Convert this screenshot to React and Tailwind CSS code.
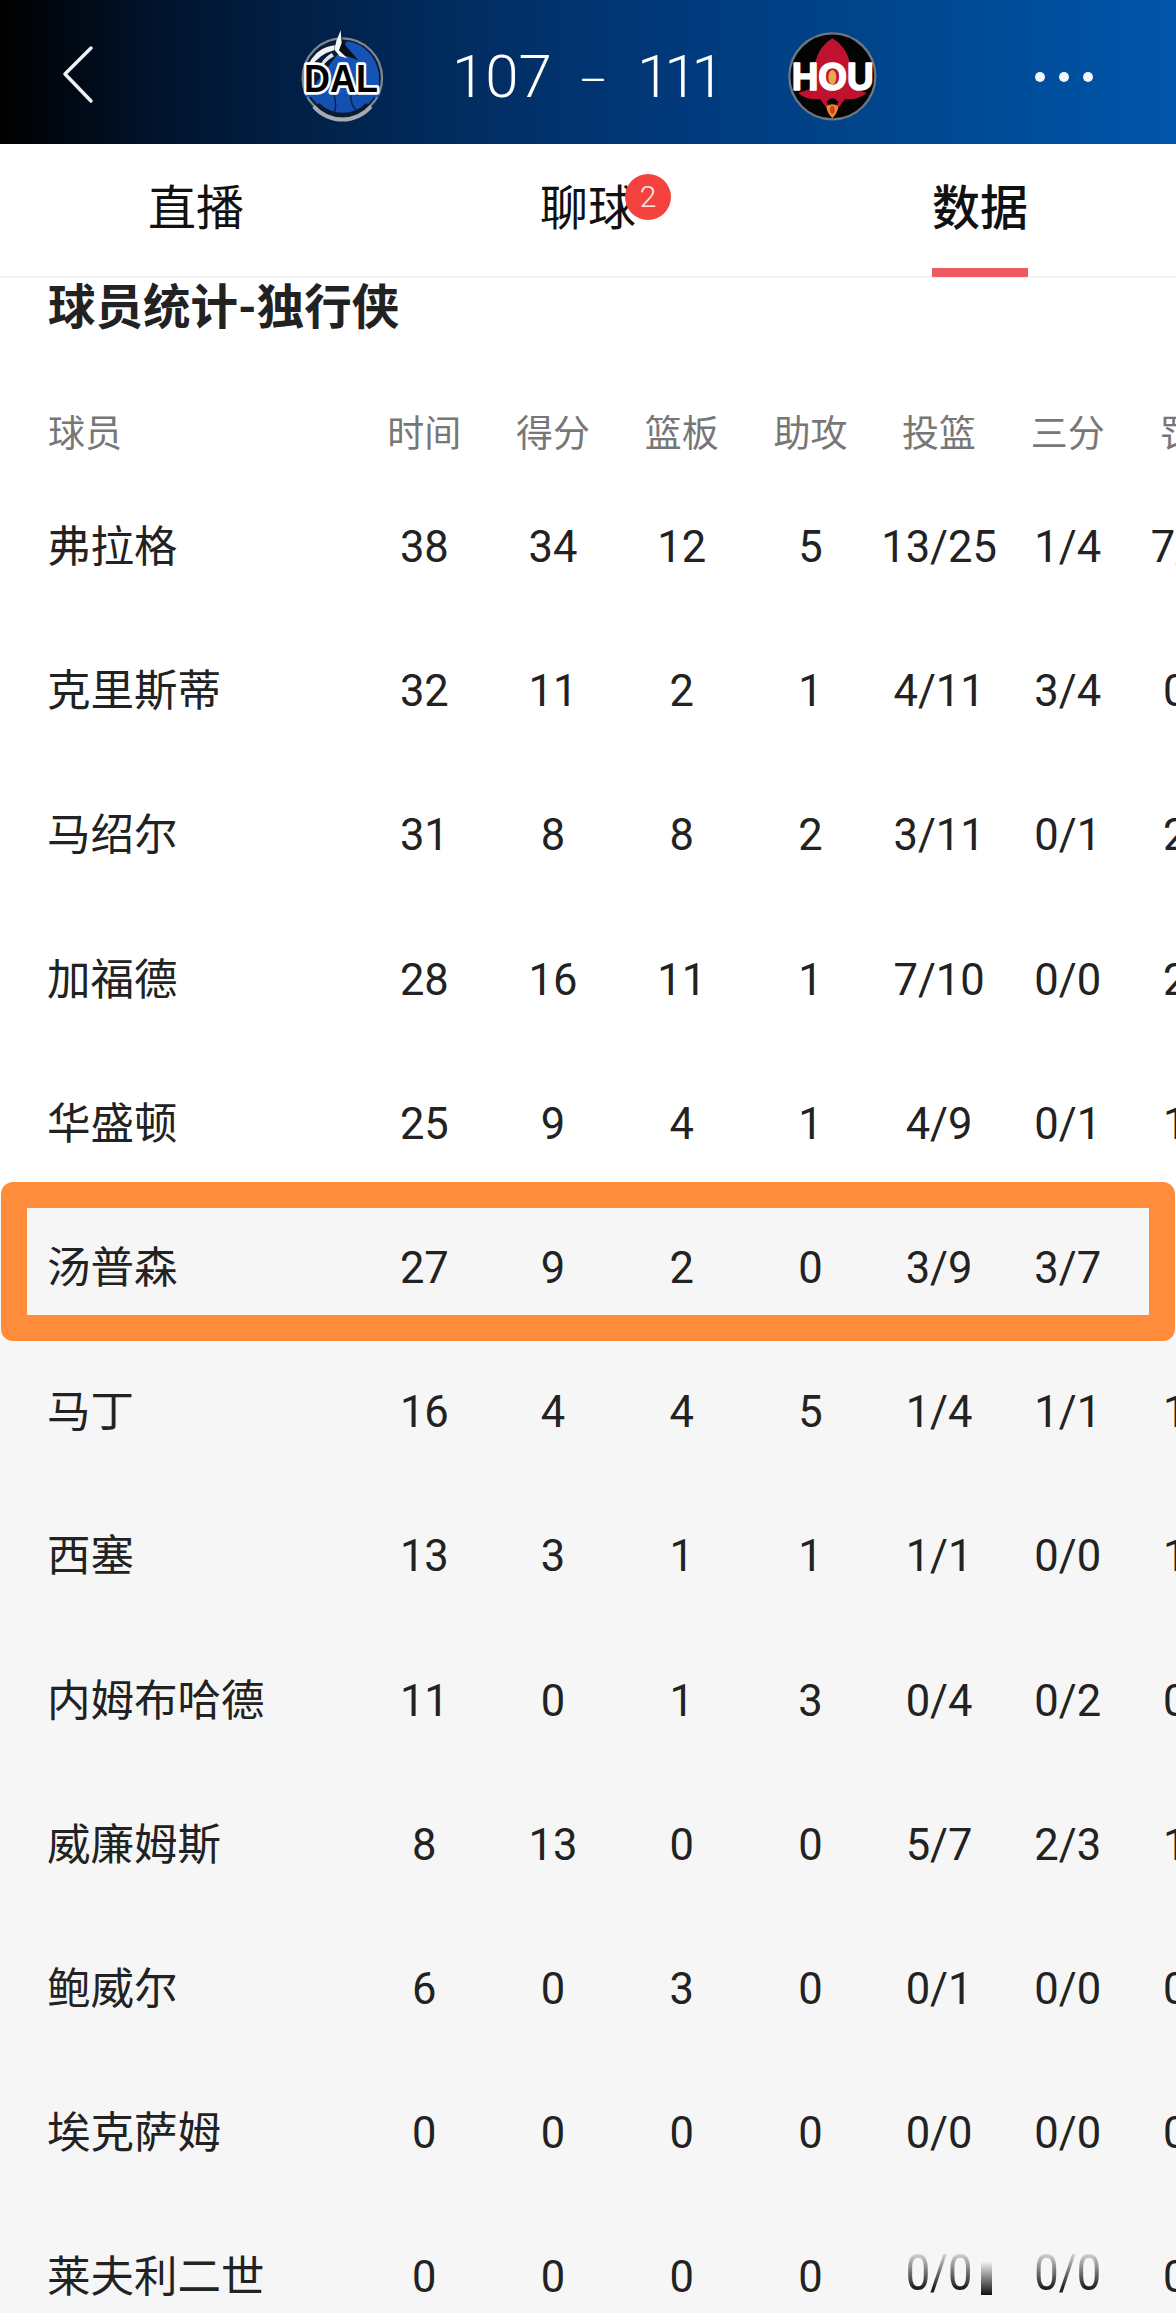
import React from "react";

const players = [
  ["弗拉格", "38", "34", "12", "5", "13/25", "1/4", "7/10"],
  ["克里斯蒂", "32", "11", "2", "1", "4/11", "3/4", "0/0"],
  ["马绍尔", "31", "8", "8", "2", "3/11", "0/1", "2/2"],
  ["加福德", "28", "16", "11", "1", "7/10", "0/0", "2/2"],
  ["华盛顿", "25", "9", "4", "1", "4/9", "0/1", "1/1"],
  ["汤普森", "27", "9", "2", "0", "3/9", "3/7", ""],
  ["马丁", "16", "4", "4", "5", "1/4", "1/1", "1/1"],
  ["西塞", "13", "3", "1", "1", "1/1", "0/0", "1/1"],
  ["内姆布哈德", "11", "0", "1", "3", "0/4", "0/2", "0/0"],
  ["威廉姆斯", "8", "13", "0", "0", "5/7", "2/3", "1/1"],
  ["鲍威尔", "6", "0", "3", "0", "0/1", "0/0", "0/0"],
  ["埃克萨姆", "0", "0", "0", "0", "0/0", "0/0", "0/0"],
  ["莱夫利二世", "0", "0", "0", "0", "0/0", "0/0", "0/0"],
];

const heads = ["球员", "时间", "得分", "篮板", "助攻", "投篮", "三分", "罚球"];
const GRID = "grid grid-cols-[360px_repeat(7,128.7px)] items-center w-[1261px]";

function DalLogo() {
  return (
    <svg viewBox="0 0 360 360" className="w-[120px] h-[120px] shrink-0">
      <circle cx="190" cy="183" r="119" fill="#071a38" stroke="#7f868e" strokeWidth="7" />
      <path d="M205 72 A112 112 0 0 1 300 190 L300 240 L80 240 Z" fill="#1553b5" />
      <path d="M92 232 H290 A112 112 0 0 1 92 232 Z" fill="#1450ad" />
      <path d="M110 268 A112 112 0 0 0 272 268 L262 258 A100 100 0 0 1 120 258 Z" fill="#0a1a33" />
      <path d="M100 272 A118 118 0 0 0 280 272 L272 264 A108 108 0 0 1 108 264 Z" fill="#a7abb0" />
      <path d="M165 235 Q175 265 165 290 M215 235 Q215 265 232 280" stroke="#0a1f45" strokeWidth="4" fill="none" />
      <path d="M185 40 L192 75 L208 95 L238 130 L205 118 L170 112 L168 88 L178 72 Z" fill="#0b0f18" />
      <path d="M185 40 L188 78 L180 100 L205 124 L182 118 L166 98 L172 72 Z" fill="#f4f6f8" />
      <path d="M168 85 Q112 90 84 150 L96 150 Q120 112 165 100 Z" fill="#eef1f4" />
      <path d="M158 108 Q130 125 118 155 L126 155 Q140 132 165 118 Z" fill="#dfe4ea" />
      <text
        x="186"
        y="226"
        textAnchor="middle"
        fontFamily="'Liberation Sans', sans-serif"
        fontWeight="700"
        fontSize="118"
        textLength="222"
        lengthAdjust="spacingAndGlyphs"
        fill="#000000"
        stroke="#ffffff"
        strokeWidth="16"
        strokeLinejoin="round"
        style={{ paintOrder: "stroke" }}
      >
        DAL
      </text>
    </svg>
  );
}

function HouLogo() {
  return (
    <svg viewBox="0 0 360 360" className="w-[120px] h-[120px] shrink-0">
      <circle cx="187" cy="172" r="129" fill="#040404" stroke="#6e7680" strokeWidth="7" />
      <path d="M187 58 Q225 78 240 130 L240 205 L290 222 Q262 245 225 240 L205 268 H170 L150 240 Q112 245 84 222 L135 205 L135 130 Q150 78 187 58 Z" fill="#c0122f" />
      <path d="M170 248 Q187 228 205 248 L198 262 H176 Z" fill="#050505" />
      <path d="M187 298 Q168 278 170 262 Q187 250 204 262 Q206 278 187 298 Z" fill="#f08a24" />
      <ellipse cx="187" cy="272" rx="7" ry="12" fill="#c4451c" />
      <text
        x="188"
        y="212"
        textAnchor="middle"
        fontFamily="'Liberation Sans', sans-serif"
        fontWeight="700"
        fontSize="118"
        textLength="246"
        lengthAdjust="spacingAndGlyphs"
        fill="#ffffff"
        stroke="#ffffff"
        strokeWidth="5"
        strokeLinejoin="round"
      >
        HOU
      </text>
      <ellipse cx="187" cy="175" rx="12" ry="22" fill="#e9a94e" />
    </svg>
  );
}

function Scoreboard() {
  return (
    <header className="relative h-[144px] pt-[10px] bg-[linear-gradient(to_right,#000000_0%,#01142f_14%,#012a5b_36%,#013a7c_58%,#00488f_78%,#0055ab_100%)] flex items-center">
      <svg viewBox="0 0 40 64" className="w-[40px] h-[64px] ml-[58px] shrink-0 mt-[-4px]">
        <path d="M33 5 L7 31 L33 58" fill="none" stroke="#f0f2f4" strokeWidth="3.5" strokeLinecap="round" strokeLinejoin="round" />
      </svg>
      <div className="ml-[181px]">
        <DalLogo />
      </div>
      <div className="w-[104px] ml-[53px] text-[60px] leading-none font-light text-white text-left">107</div>
      <div className="w-[30px] ml-[22px] mt-[8px] text-[44px] leading-none font-light text-white text-center">–</div>
      <div className="w-[84px] ml-[29px] text-[60px] leading-none font-light text-white text-left tracking-[-6px]">111</div>
      <div className="ml-[49px] mt-[4px]">
        <HouLogo />
      </div>
      <div className="ml-[145px] flex gap-[14px]">
        <span className="w-[10px] h-[10px] rounded-full bg-[#f2f6fb]" />
        <span className="w-[10px] h-[10px] rounded-full bg-[#f2f6fb]" />
        <span className="w-[10px] h-[10px] rounded-full bg-[#f2f6fb]" />
      </div>
    </header>
  );
}

function Tabs() {
  return (
    <nav className="grid grid-cols-3 h-[134px] border-b-2 border-[#f3f3f3] text-[48px] leading-[64px] text-[#111111]">
      <div className="flex items-center justify-center pb-[2px]">直播</div>
      <div className="flex items-center justify-center pb-[2px]">
        <span className="relative">
          聊球
          <span className="absolute left-[85px] top-[-3px] w-[46px] h-[46px] rounded-full bg-[#f4433f] text-[#fde9e8] text-[30px] font-light leading-[46px] text-center">
            2
          </span>
        </span>
      </div>
      <div className="flex items-center justify-center pb-[2px]">
        <span className="relative font-medium">
          数据
          <span className="absolute left-0 right-0 top-[91px] h-[9px] bg-[#ee5a5f]" />
        </span>
      </div>
    </nav>
  );
}

function SmearCell({ bar }) {
  return (
    <div className="relative text-center">
      <span className="inline-block origin-bottom scale-y-[1.15] [mask-image:linear-gradient(to_bottom,transparent_12%,black_70%)]">0/0</span>
      {bar && (
        <span className="absolute left-[106px] top-[13px] w-[11px] h-[34px] bg-[linear-gradient(to_bottom,transparent,#111111)]" />
      )}
    </div>
  );
}

export default function App() {
  return (
    <div className="relative w-[1176px] h-[2313px] overflow-hidden bg-white font-['Roboto','Noto_Sans_CJK_SC',sans-serif]">
      <Scoreboard />
      <Tabs />
      <h1 className="pl-[48px] pt-[1px] h-[58px] mb-[57px] text-[47.5px] leading-[58px] font-bold text-[#222222]">
        球员统计-独行侠
      </h1>
      <div className={`${GRID} h-[83px] text-[37px] text-[#777777]`}>
        {heads.map((h, i) => (
          <div key={h} className={i === 0 ? "pl-[48px]" : "text-center"}>
            {h}
          </div>
        ))}
      </div>
      {players.map((row, r) => (
        <div
          key={row[0]}
          className={`${GRID} h-[144.2px] text-[43.5px] leading-[60px] text-[#222222] ${r >= 5 ? "bg-[#f6f6f6]" : "bg-white"}`}
        >
          {row.map((v, i) => {
            if (i === 0) {
              return (
                <div key={i} className="pl-[47px]">
                  {v}
                </div>
              );
            }
            if (r === 12 && (i === 5 || i === 6)) {
              return <SmearCell key={i} bar={i === 5} />;
            }
            return (
              <div key={i} className="text-center">
                {v}
              </div>
            );
          })}
        </div>
      ))}
      <div className="absolute left-[1px] top-[1182px] w-[1174px] h-[159px] border-[26px] border-[#ff8c3a] rounded-[12px]" />
    </div>
  );
}
